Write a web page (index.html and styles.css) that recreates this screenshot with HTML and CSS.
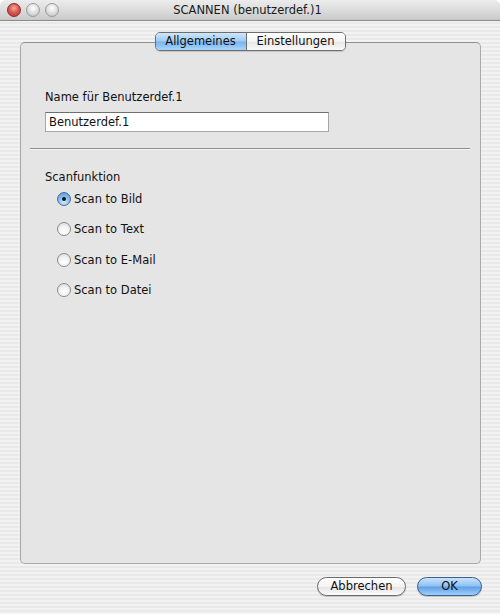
FILE: index.html
```html
<!DOCTYPE html>
<html>
<head>
<meta charset="utf-8">
<link rel="stylesheet" href="styles.css">
</head>
<body>
<div class="window">
  <div class="titlebar">
    <div class="lights">
      <span class="light red"></span>
      <span class="light gray"></span>
      <span class="light gray"></span>
    </div>
    <div class="title">SCANNEN (benutzerdef.)1</div>
  </div>
  <div class="main">
    <div class="tabs">
      <div class="tab active">Allgemeines</div>
      <div class="tab">Einstellungen</div>
    </div>
    <div class="box">
      <div class="label">Name für Benutzerdef.1</div>
      <div class="field">Benutzerdef.1</div>
      <div class="sep"></div>
      <div class="label group-label">Scanfunktion</div>
      <div class="radios">
        <div class="radio-row"><span class="radio checked"></span><span>Scan to Bild</span></div>
        <div class="radio-row"><span class="radio"></span><span>Scan to Text</span></div>
        <div class="radio-row"><span class="radio"></span><span>Scan to E-Mail</span></div>
        <div class="radio-row"><span class="radio"></span><span>Scan to Datei</span></div>
      </div>
    </div>
    <div class="buttons">
      <div class="btn">Abbrechen</div>
      <div class="btn default">OK</div>
    </div>
  </div>
</div>
</body>
</html>
```
FILE: styles.css
```css
html, body {
  margin: 0;
  padding: 0;
}
body {
  width: 500px;
  height: 614px;
  overflow: hidden;
  font-family: "DejaVu Sans", "Noto Sans", sans-serif;
  font-size: 11.5px;
  color: #111;
}
.window {
  width: 500px;
  height: 614px;
  display: flex;
  flex-direction: column;
  background: repeating-linear-gradient(180deg, #f2f2f2 0 2px, #e9e9e9 2px 4px);
  border-top-right-radius: 6px;
  border-top-left-radius: 6px;
  overflow: hidden;
}
.titlebar {
  height: 20px;
  border-bottom: 1px solid #8a8a8a;
  background: linear-gradient(180deg, #ececec 0%, #dcdcdc 50%, #c9c9c9 100%);
  display: flex;
  align-items: center;
  position: relative;
}
.lights {
  display: flex;
  gap: 5px;
  padding-left: 7px;
}
.light {
  width: 14px;
  height: 14px;
  border-radius: 50%;
  box-sizing: border-box;
}
.light.red {
  border: 1px solid #8a2a2a;
  background: radial-gradient(circle at 50% 35%, #f4aaa5 0%, #dc5a52 45%, #b4332c 100%);
}
.light.gray {
  border: 1px solid #9a9a9a;
  background: radial-gradient(circle at 50% 35%, #ffffff 0%, #e2e2e2 45%, #b9b9b9 100%);
}
.title {
  flex: 1;
  text-align: center;
  margin-right: 64px;
  font-size: 11.5px;
  color: #1a1a1a;
}
.main {
  flex: 1;
  display: flex;
  flex-direction: column;
}
.tabs {
  align-self: center;
  margin-top: 11px;
  height: 19px;
  display: flex;
  border: 1px solid #6e6e6e;
  border-radius: 5px;
  box-sizing: border-box;
  overflow: hidden;
  position: relative;
  z-index: 2;
  box-shadow: 0 1px 1px rgba(0,0,0,0.15);
}
.tab {
  height: 17px;
  line-height: 17px;
  text-align: center;
  background: linear-gradient(180deg, #ffffff 0%, #f4f4f4 50%, #e6e6e6 51%, #fafafa 100%);
}
.tab:first-child {
  width: 90px;
  border-right: 1px solid #6e6e6e;
}
.tab:last-child {
  width: 98px;
}
.tab.active {
  background: linear-gradient(180deg, #cfe6fb 0%, #9ccbf3 48%, #78b3ee 52%, #a9d5fb 100%);
}
.box {
  margin: -9px 19px 0 20px;
  height: 522px;
  box-sizing: border-box;
  border: 1px solid #a9a9a9;
  border-top-color: #8f8f8f;
  border-radius: 5px;
  background: #e5e5e5;
  padding: 47px 0 0 24px;
  display: flex;
  flex-direction: column;
}
.label {
  height: 14px;
  line-height: 14px;
}
.field {
  margin-top: 8px;
  width: 284px;
  height: 20px;
  box-sizing: border-box;
  background: #fff;
  border: 1px solid #a6a6a6;
  border-top-color: #6f6f6f;
  padding-left: 3px;
  line-height: 18px;
  font-size: 11.5px;
}
.sep {
  margin: 16px 10px 0 -15px;
  height: 1px;
  background: #8e8e8e;
  border-bottom: 1px solid #f6f6f6;
}
.group-label {
  margin-top: 20px;
}
.radios {
  display: flex;
  flex-direction: column;
  padding-left: 12px;
}
.radio-row {
  height: 30.3px;
  display: flex;
  align-items: center;
  gap: 3px;
}
.radio {
  width: 14px;
  height: 14px;
  border-radius: 50%;
  box-sizing: border-box;
  border: 1px solid #8a8a8a;
  background: radial-gradient(circle at 50% 70%, #ffffff 0%, #f2f2f2 50%, #d4d4d4 100%);
  position: relative;
}
.radio.checked {
  border-color: #4a6f9a;
  background: radial-gradient(circle at 50% 75%, #d8ecfd 0%, #8ac0f0 45%, #4a8fd8 100%);
}
.radio.checked::after {
  content: "";
  position: absolute;
  left: 4px;
  top: 4px;
  width: 4px;
  height: 4px;
  border-radius: 50%;
  background: #111;
}
.buttons {
  display: flex;
  justify-content: flex-end;
  gap: 11px;
  margin: 13px 18px 0 0;
}
.btn {
  height: 19px;
  line-height: 17px;
  box-sizing: border-box;
  border: 1px solid #6a6a6a;
  border-radius: 10px;
  text-align: center;
  background: linear-gradient(180deg, #ffffff 0%, #f3f3f3 50%, #e4e4e4 52%, #fbfbfb 100%);
  box-shadow: 0 1px 1px rgba(0,0,0,0.2);
  width: 89px;
}
.btn.default {
  width: 65px;
  border-color: #3d5f8c;
  background: linear-gradient(180deg, #c8e2fb 0%, #8ec1f2 48%, #5d9fe6 52%, #9fd0fb 100%);
}
```
